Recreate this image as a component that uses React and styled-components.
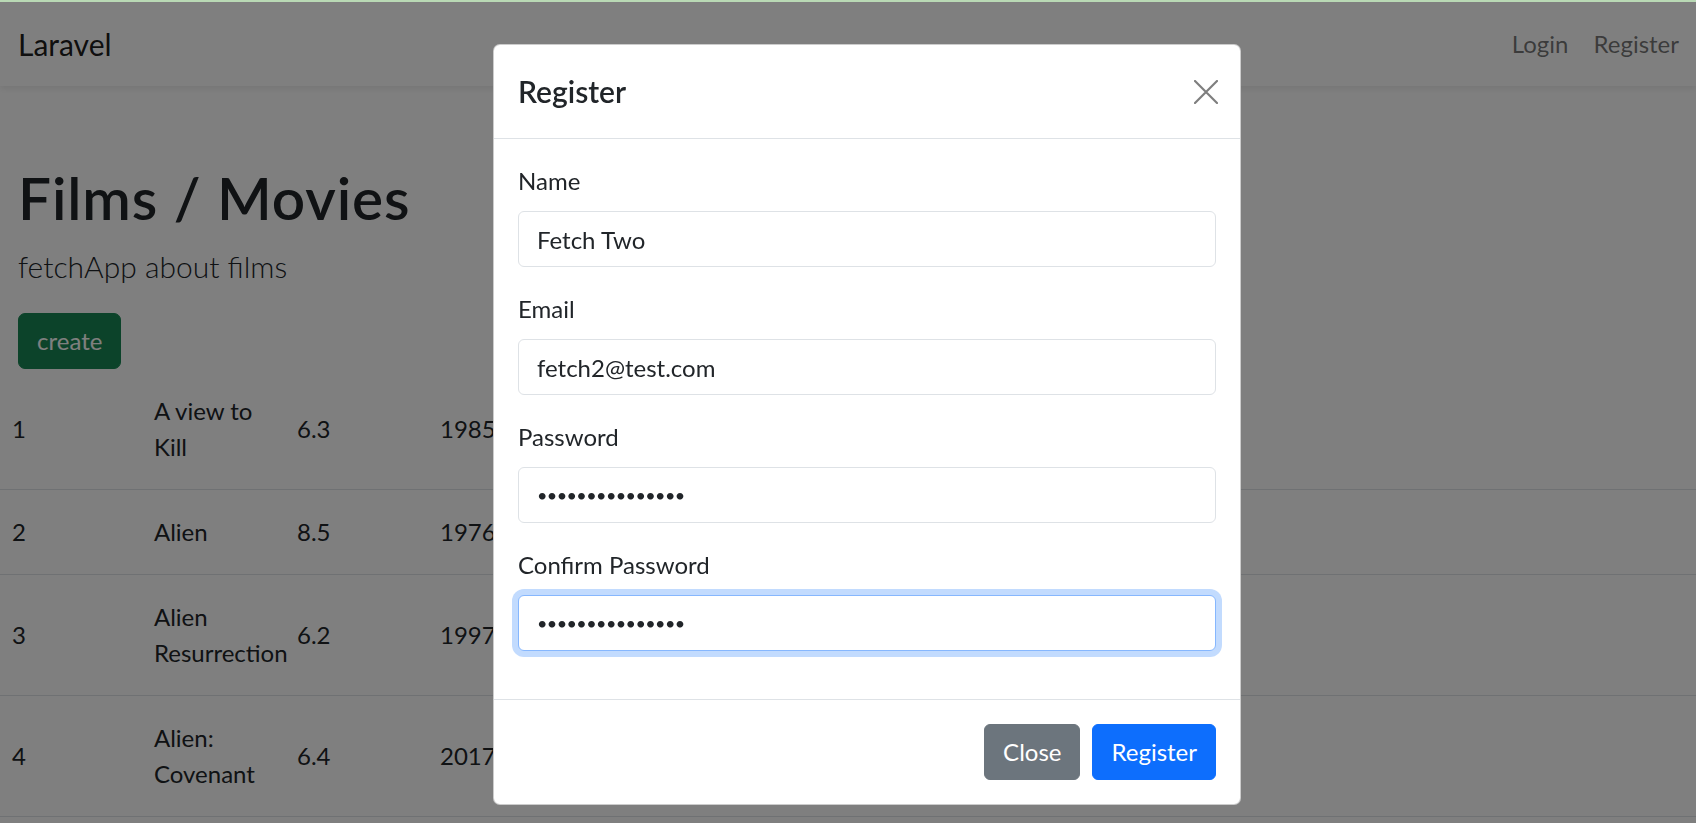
import React from 'react'
import styled, { createGlobalStyle, css } from 'styled-components'

const GlobalStyle = createGlobalStyle`
  * { box-sizing: border-box; }
  body {
    margin: 0;
    font-family: Lato, "Noto Sans", "Liberation Sans", sans-serif;
    color: #212529;
    background: #fff;
  }
`

const TopLine = styled.div`
  position: fixed;
  top: 0;
  left: 0;
  right: 0;
  height: 2px;
  background: #b9d9b5;
  z-index: 2000;
`

const Navbar = styled.nav`
  height: 86px;
  background: #fff;
  box-shadow: 0 3px 6px rgba(0, 0, 0, .075);
  display: flex;
  align-items: center;
  justify-content: space-between;
  padding: 2px 17px 0 18px;
`
const Brand = styled.a`
  font-size: 30px;
  line-height: 45px;
  color: rgba(0, 0, 0, .9);
  text-decoration: none;
`
const NavList = styled.div`
  display: flex;
  gap: 25px;
`
const NavLink = styled.a`
  font-size: 24px;
  line-height: 36px;
  color: rgba(0, 0, 0, .55);
  text-decoration: none;
`

const Main = styled.main`
  padding-top: 76px;
`
const Hero = styled.div`
  padding: 0 18px;
`
const Title = styled.h1`
  margin: 0 0 12px;
  font-size: 58.5px;
  font-weight: 600;
  line-height: 1.2;
  letter-spacing: 0.9px;
`
const Lead = styled.p`
  margin: 0 0 24px;
  font-size: 30px;
  font-weight: 300;
  line-height: 1.5;
`
const CreateButton = styled.button`
  font-family: inherit;
  font-size: 24px;
  line-height: 36px;
  padding: 9px 18px;
  border: 1px solid #198754;
  border-radius: 7px;
  background: #198754;
  color: #fff;
`

const Table = styled.div`
  width: 100%;
`
const Row = styled.div`
  display: grid;
  grid-template-columns: 142px 143px 143px 143px 1fr;
  align-items: center;
  border-bottom: 1px solid #dee2e6;
`
const Cell = styled.div`
  padding: 24px 0 24px 12px;
  font-size: 24px;
  line-height: 36px;
  white-space: nowrap;
`
const Line = styled.span`
  display: block;
`

const Backdrop = styled.div`
  position: fixed;
  inset: 0;
  background: rgba(0, 0, 0, .5);
  z-index: 1000;
`
const Dialog = styled.div`
  position: fixed;
  top: 44px;
  left: 493px;
  width: 748px;
  background: #fff;
  border: 1px solid rgba(0, 0, 0, .2);
  border-radius: 7px;
  z-index: 1100;
`
const ModalHeader = styled.div`
  display: flex;
  align-items: center;
  padding: 24px;
  border-bottom: 1px solid #dee2e6;
`
const ModalTitle = styled.h5`
  margin: 0;
  font-size: 30px;
  font-weight: 600;
  line-height: 1.5;
`
const CloseX = styled.button`
  margin: -12px -8px -12px auto;
  width: 36px;
  height: 36px;
  padding: 6px;
  border: none;
  background: transparent;
  opacity: .5;
  display: flex;
  align-items: center;
  justify-content: center;
`
const ModalBody = styled.div`
  padding: 24px;
`
const FormGroup = styled.div`
  margin-bottom: 24px;
`
const Label = styled.label`
  display: block;
  margin-bottom: 12px;
  font-size: 24px;
  line-height: 36px;
`
const Input = styled.input`
  display: block;
  width: 100%;
  height: 56px;
  padding: 9px 18px;
  font-family: inherit;
  font-size: 24px;
  line-height: 36px;
  color: #212529;
  background: #fff;
  border: 1px solid #dee2e6;
  border-radius: 6px;
  outline: none;
  ${p => p.type === 'password' && css`
    font-size: 18px;
    letter-spacing: -0.6px;
  `}
  ${p => p.$focused && css`
    border-color: #86b7fe;
    box-shadow: 0 0 0 6px rgba(13, 110, 253, .25);
  `}
`
const ModalFooter = styled.div`
  display: flex;
  justify-content: flex-end;
  padding: 18px;
  border-top: 1px solid #dee2e6;
`
const Button = styled.button`
  margin: 6px;
  font-family: inherit;
  font-size: 24px;
  line-height: 36px;
  padding: 9px 18px;
  border-radius: 6px;
  color: #fff;
  border: 1px solid ${p => p.$color};
  background: ${p => p.$color};
`

const films = [
  { id: 1, name: ['A view to', 'Kill'], rating: '6.3', year: '1985' },
  { id: 2, name: ['Alien'], rating: '8.5', year: '1976' },
  { id: 3, name: ['Alien', 'Resurrection'], rating: '6.2', year: '1997' },
  { id: 4, name: ['Alien:', 'Covenant'], rating: '6.4', year: '2017' },
]

const fields = [
  { label: 'Name', type: 'text', value: 'Fetch Two' },
  { label: 'Email', type: 'email', value: 'fetch2@test.com' },
  { label: 'Password', type: 'password', value: 'fetchtwopasswrd' },
  { label: 'Confirm Password', type: 'password', value: 'fetchtwopasswrd', focused: true },
]

const App = () => {
  return (
    <>
      <GlobalStyle />
      <TopLine />
      <Navbar>
        <Brand href="#">Laravel</Brand>
        <NavList>
          <NavLink href="#">Login</NavLink>
          <NavLink href="#">Register</NavLink>
        </NavList>
      </Navbar>
      <Main>
        <Hero>
          <Title>Films / Movies</Title>
          <Lead>fetchApp about films</Lead>
          <CreateButton>create</CreateButton>
        </Hero>
        <Table>
          {films.map(f => (
            <Row key={f.id}>
              <Cell>{f.id}</Cell>
              <Cell>{f.name.map(l => <Line key={l}>{l}</Line>)}</Cell>
              <Cell>{f.rating}</Cell>
              <Cell>{f.year}</Cell>
              <Cell />
            </Row>
          ))}
        </Table>
      </Main>

      <Backdrop />
      <Dialog>
        <ModalHeader>
          <ModalTitle>Register</ModalTitle>
          <CloseX aria-label="Close">
            <svg width="24" height="24" viewBox="0 0 24 24">
              <path d="M1 1L23 23M23 1L1 23" stroke="#000" strokeWidth="2.2" strokeLinecap="round" />
            </svg>
          </CloseX>
        </ModalHeader>
        <ModalBody>
          {fields.map(f => (
            <FormGroup key={f.label}>
              <Label>{f.label}</Label>
              <Input type={f.type} defaultValue={f.value} readOnly $focused={f.focused} />
            </FormGroup>
          ))}
        </ModalBody>
        <ModalFooter>
          <Button $color="#6c757d">Close</Button>
          <Button $color="#0d6efd">Register</Button>
        </ModalFooter>
      </Dialog>
    </>
  )
}

export default App
